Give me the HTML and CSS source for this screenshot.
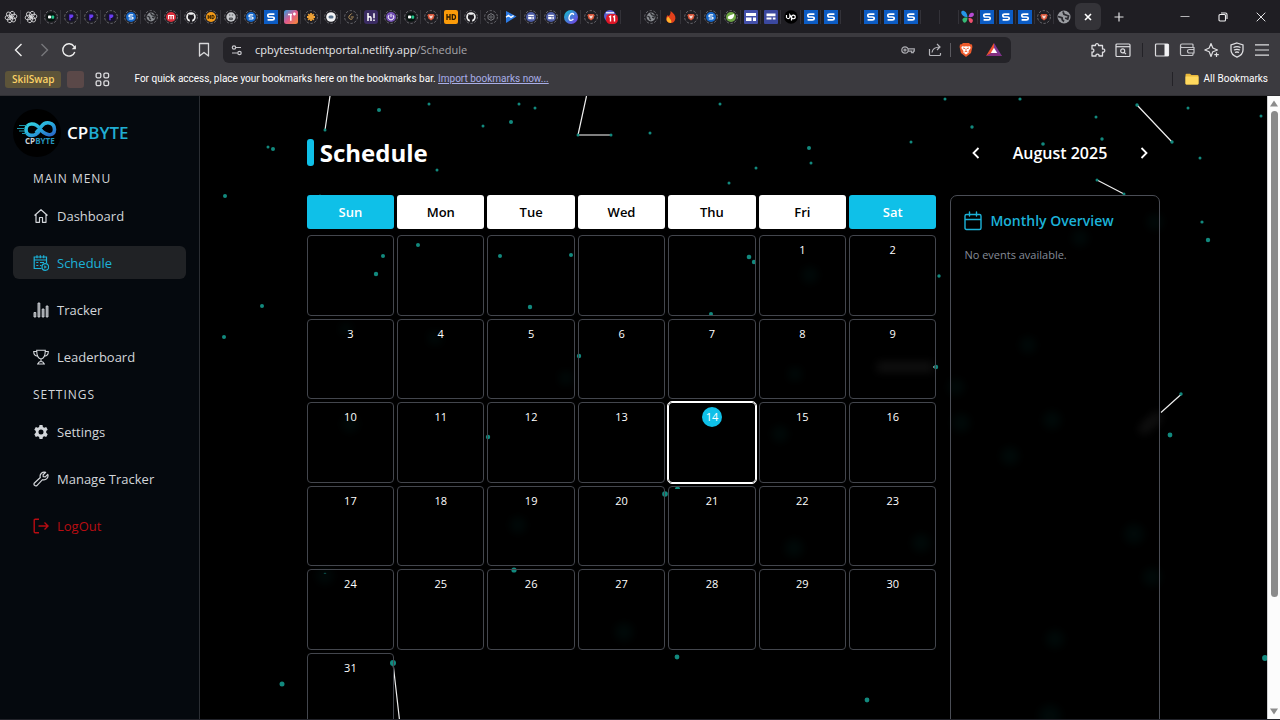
FILE: index.html
```html
<!DOCTYPE html>
<html lang="en">
<head>
<meta charset="utf-8">
<meta name="viewport" content="width=device-width, initial-scale=1">
<title>CPByte Schedule</title>
<link rel="stylesheet" href="styles.css">
</head>
<body>
<svg class="sprite" aria-hidden="true">
  <defs>
    <linearGradient id="g-inf" x1="0" y1="0" x2="1" y2="1"><stop offset="0" stop-color="#35d6e0"/><stop offset=".5" stop-color="#27a9dc"/><stop offset="1" stop-color="#2a63c8"/></linearGradient>
    <linearGradient id="g-t" x1="0" y1="0" x2="1" y2="1"><stop offset="0" stop-color="#2c9fe0"/><stop offset=".5" stop-color="#e05a8c"/><stop offset="1" stop-color="#f58a34"/></linearGradient>
    <linearGradient id="g-c" x1="0" y1="0" x2="1" y2="1"><stop offset="0" stop-color="#10c4cc"/><stop offset="1" stop-color="#7a35e4"/></linearGradient>
    <filter id="soft" x="-100%" y="-100%" width="300%" height="300%"><feGaussianBlur stdDeviation="5"/></filter>
    <symbol id="ring" viewBox="0 0 14 14"><circle cx="7" cy="7" r="6.4" fill="none" stroke="#737378" stroke-width=".9" stroke-dasharray="2.4 1.6"/></symbol>
    <symbol id="gpt" viewBox="0 0 14 14"><g fill="none" stroke="#dcdcde" stroke-width=".8"><ellipse cx="7" cy="4.4" rx="2.3" ry="3.4" transform="rotate(20 7 7)"/><ellipse cx="7" cy="4.4" rx="2.3" ry="3.4" transform="rotate(80 7 7)"/><ellipse cx="7" cy="4.4" rx="2.3" ry="3.4" transform="rotate(140 7 7)"/><ellipse cx="7" cy="4.4" rx="2.3" ry="3.4" transform="rotate(200 7 7)"/><ellipse cx="7" cy="4.4" rx="2.3" ry="3.4" transform="rotate(260 7 7)"/><ellipse cx="7" cy="4.4" rx="2.3" ry="3.4" transform="rotate(320 7 7)"/></g></symbol>
    <symbol id="cam" viewBox="0 0 14 14"><use href="#ring"/><circle cx="7" cy="7" r="4.6" fill="#06130f"/><rect x="4" y="5.6" width="3" height="3" rx=".8" fill="#fff"/><rect x="7.4" y="5.4" width="2.8" height="3.4" rx=".8" fill="#23c48a"/></symbol>
    <symbol id="pin" viewBox="0 0 14 14"><use href="#ring"/><circle cx="7" cy="7" r="4.6" fill="#17132e"/><path d="M5.2 4.4h3.4L9.6 6 8 8H6.6v2.2H5.4z" fill="#6a3df0"/></symbol>
    <symbol id="sring" viewBox="0 0 14 14"><use href="#ring"/><circle cx="7" cy="7" r="5" fill="#1667c9"/><path d="M9.2 4.9H6.1q-1.2 0-1.2 1T6.1 7h1.8q1.2 0 1.2 1T7.9 9H4.8" fill="none" stroke="#fff" stroke-width="1.2"/></symbol>
    <symbol id="globe" viewBox="0 0 14 14"><use href="#ring"/><circle cx="7" cy="7" r="4.4" fill="#8b8e93"/><path d="M3.4 6l2.2 1.2.3 2L7 10M6.6 3l1 1.700 2.800 1-.6 2.200-1.700-.8" fill="none" stroke="#2c2d31" stroke-width="1.300"/></symbol>
    <symbol id="mred" viewBox="0 0 14 14"><use href="#ring"/><circle cx="7" cy="7" r="5" fill="#d9303d"/><path d="M4.600 9.200V5.500h4.800v3.700M7 5.500v3.700" fill="none" stroke="#fff" stroke-width="1.100"/></symbol>
    <symbol id="git" viewBox="0 0 14 14"><use href="#ring"/><circle cx="7" cy="7" r="4.8" fill="#f2f2f3"/><path d="M5.800 12V9.800C4 9.300 3.800 8 3.900 6.700c0-.6.2-.9.5-1.300V4l1.300.7h2.600L9.600 4v1.400c.9 1.200.8 3.600-1.400 4.300V12z" fill="#1f1e23"/></symbol>
    <symbol id="hdr" viewBox="0 0 14 14"><use href="#ring"/><circle cx="7" cy="7" r="5" fill="#f29a18"/><path d="M4.200 5v4M6.300 5v4M4.200 7h2.100M8 5v4M8 5.200q2.200 0 2.200 1.800T8 8.800" fill="none" stroke="#2c1c00" stroke-width="1"/></symbol>
    <symbol id="face" viewBox="0 0 14 14"><use href="#ring"/><circle cx="7" cy="7" r="4.700" fill="#c5c7cb"/><path d="M5 5h1.400M7.800 5h1.400M5.400 8h3v1.600h-3z" stroke="#44464a" fill="#85878c" stroke-width=".9"/></symbol>
    <symbol id="ssq" viewBox="0 0 14 14"><path fill="#0c5cc4" d="M0 0h14v14H0z"/><path d="M10.400 4.100H5.700q-1.900 0-1.900 1.500T5.700 7h2.600q1.900 0 1.900 1.400T8.300 9.900H3.600" fill="none" stroke="#fff" stroke-width="1.700"/></symbol>
    <symbol id="tsq" viewBox="0 0 14 14"><rect width="14" height="14" rx="2.500" fill="url(#g-t)"/><path d="M4 4.600h4M6.800 4.200v6.500M10.400 2.600v3M9 4h2.800" stroke="#fff" stroke-width="1.500" fill="none"/></symbol>
    <symbol id="sun" viewBox="0 0 14 14"><use href="#ring"/><path d="M7 3v8M3 7h8M4.200 4.200l5.600 5.600M9.800 4.200L4.200 9.800" stroke="#eda136" stroke-width="1.800"/></symbol>
    <symbol id="chat" viewBox="0 0 14 14"><use href="#ring"/><circle cx="7" cy="7" r="4.800" fill="#f3f4f6"/><rect x="4.500" y="5.400" width="5" height="3" rx="1.500" fill="#59738d"/></symbol>
    <symbol id="leet" viewBox="0 0 14 14"><use href="#ring"/><path d="M7.800 3.400L5.200 6q-1 1.400.2 2.600 1.600 1.600 3.200 0M6.800 7h3" fill="none" stroke="#b9955c" stroke-width="1"/></symbol>
    <symbol id="hash" viewBox="0 0 14 14"><rect width="14" height="14" rx="3" fill="#3b2c63"/><path d="M4 3v8M4 7.300q3-1.600 3 .8V11M10 3.200v5M10 9.600V11" stroke="#fff" stroke-width="1.500" fill="none"/></symbol>
    <symbol id="power" viewBox="0 0 14 14"><use href="#ring"/><circle cx="7" cy="7" r="5" fill="#7551b7"/><path d="M7 3.800V7M5 5.100a2.800 2.800 0 1 0 4 0" stroke="#fff" fill="none"/></symbol>
    <symbol id="brave" viewBox="0 0 14 14"><use href="#ring"/><path d="M4.300 4h5.400l.8 1.200-.8 3.300L7 10.600 4.300 8.500 3.500 5.200z" fill="#d7563a"/><path d="M5 5.300l2 .6 2-.6-.6 1.900L7 9 5.600 7.200z" fill="#f3d9d2"/></symbol>
    <symbol id="hdsq" viewBox="0 0 14 14"><rect width="14" height="14" rx="2" fill="#fb9b09"/><path d="M3 4v6M6 4v6M3 7h3M8.300 4v6M8.300 4.600q3.200-.4 3.200 2.400t-3.200 2.400" fill="none" stroke="#2b1a00" stroke-width="1.300"/></symbol>
    <symbol id="gem" viewBox="0 0 14 14"><use href="#ring"/><path d="M7 3.600l3 1.700v3.400l-3 1.700-3-1.700V5.300z" fill="none" stroke="#7c7d82"/><circle cx="7" cy="7" r="1.200" fill="none" stroke="#7c7d82" stroke-width=".8"/></symbol>
    <symbol id="play" viewBox="0 0 14 14"><path d="M2 1l10.500 5.500L2 13z" fill="#2c7be5"/><path d="M2 7.200l2.500-1.800 2.500 2 2.600-1.800" stroke="#fff" fill="none" stroke-width="1.300"/></symbol>
    <symbol id="calr" viewBox="0 0 14 14"><use href="#ring"/><circle cx="7" cy="7" r="5" fill="#4c5ca6"/><path d="M4.200 4.800h5.600v4.400H4.200z" fill="#fff"/><path d="M4.200 6.500h5.600M8 6.500v2.700" stroke="#4c5ca6" stroke-width=".8"/></symbol>
    <symbol id="canva" viewBox="0 0 14 14"><circle cx="7" cy="7" r="7" fill="url(#g-c)"/><path d="M9.500 5q.2-1.700-1.500-1.500C5.800 3.900 4.800 7 5 8.600c.3 2.300 2.900 2.300 4.400.2" fill="none" stroke="#fff" stroke-width="1.300"/></symbol>
    <symbol id="badge" viewBox="0 0 14 14"><circle cx="6" cy="6" r="6" fill="#575fd0"/><path d="M2 2.800h8" stroke="#fff" stroke-width="1.200"/><rect x="2" y="4" width="12" height="10" rx="4.500" fill="#dd1626"/><path d="M5 7l1.500-.8v5.300M9 7l1.500-.8v5.300" stroke="#fff" stroke-width="1.400" fill="none"/></symbol>
    <symbol id="flame" viewBox="0 0 14 14"><path d="M6.600 1c3 2.200 5.200 4.700 4.800 7.500C11 11.500 9 13 7 13c-3 0-4.800-2-4.800-4.300 0-1.700.8-2.800 1.700-3.700l.8 1.200C6 5 6.800 3.500 6.600 1z" fill="#e2401b"/><path d="M4 6.500C1 10 3.500 13 7 13c1.500-2-1-4.300-3-6.500z" fill="#fdb32b"/></symbol>
    <symbol id="leaf" viewBox="0 0 14 14"><use href="#ring"/><circle cx="7" cy="7" r="5" fill="#6da544"/><path d="M3.800 8.500C3.500 5 7 5.500 10 3.800c.5 4-2 6.700-6.200 4.700z" fill="#fff"/></symbol>
    <symbol id="cals" viewBox="0 0 14 14"><rect width="14" height="14" rx="1" fill="#4450aa"/><path d="M2 3h10v3H2zM2 7.400h5.500V11H2zM9 7.400h3V11H9z" fill="#fff"/></symbol>
    <symbol id="calt" viewBox="0 0 14 14"><rect width="14" height="14" rx="1" fill="#3b489f"/><path d="M2.500 3.500h9v2.700h-9zM2.500 7.500h5v2h-5zM8.800 7.500h2.700v2H8.800z" fill="#fff"/></symbol>
    <symbol id="up" viewBox="0 0 14 14"><circle cx="7" cy="7" r="6.800" fill="#000"/><path d="M2.500 5v2.500q1.700 2.400 3.400 0V5L8 8M7.500 10.500V6.800c.5-2.600 4-2 3.800.3C11 9 9 9.200 7.800 8" fill="none" stroke="#fff" stroke-width="1.200"/></symbol>
    <symbol id="fly" viewBox="0 0 14 14"><path d="M6.500 7C6 2 3 0 1 1s0 6 5.500 6z" fill="#2596e8"/><path d="M6.500 7.500C2 7 .5 9 2 11.500s4.500 1 4.500-4z" fill="#36ba75"/><path d="M7.500 7c.5-4 3-5 4.700-4s.6 5-4.700 4z" fill="#b64bd3"/><path d="M7.500 8c4 0 5 2 4 4s-4 1-4-4z" fill="#f0506e"/></symbol>
    <symbol id="world" viewBox="0 0 14 14"><circle cx="7" cy="7" r="6.500" fill="#9b9da2"/><path d="M1 6.500l4 1.300.3 2L7 11.500M6 1.500l1 2.800L11.500 6l-.8 3-2.500-1" fill="none" stroke="#2b2b30" stroke-width="1.800"/></symbol>
  </defs>
</svg>

<header class="browser">
  <div class="tabstrip">
    <div class="tabs">
      <button class="tab" aria-label="Tab 1"><svg><use href="#gpt"/></svg></button>
      <button class="tab" aria-label="Tab 2"><svg><use href="#gpt"/></svg></button>
      <button class="tab" aria-label="Tab 3"><svg><use href="#cam"/></svg></button>
      <button class="tab" aria-label="Tab 4"><svg><use href="#pin"/></svg></button>
      <button class="tab" aria-label="Tab 5"><svg><use href="#pin"/></svg></button>
      <button class="tab" aria-label="Tab 6"><svg><use href="#pin"/></svg></button>
      <button class="tab" aria-label="Tab 7"><svg><use href="#sring"/></svg></button>
      <button class="tab" aria-label="Tab 8"><svg><use href="#globe"/></svg></button>
      <button class="tab" aria-label="Tab 9"><svg><use href="#mred"/></svg></button>
      <button class="tab" aria-label="Tab 10"><svg><use href="#git"/></svg></button>
      <button class="tab" aria-label="Tab 11"><svg><use href="#hdr"/></svg></button>
      <button class="tab" aria-label="Tab 12"><svg><use href="#face"/></svg></button>
      <button class="tab" aria-label="Tab 13"><svg><use href="#sring"/></svg></button>
      <button class="tab" aria-label="Tab 14"><svg><use href="#ssq"/></svg></button>
      <button class="tab" aria-label="Tab 15"><svg><use href="#tsq"/></svg></button>
      <button class="tab" aria-label="Tab 16"><svg><use href="#sun"/></svg></button>
      <button class="tab" aria-label="Tab 17"><svg><use href="#chat"/></svg></button>
      <button class="tab" aria-label="Tab 18"><svg><use href="#leet"/></svg></button>
      <button class="tab" aria-label="Tab 19"><svg><use href="#hash"/></svg></button>
      <button class="tab" aria-label="Tab 20"><svg><use href="#power"/></svg></button>
      <button class="tab" aria-label="Tab 21"><svg><use href="#cam"/></svg></button>
      <button class="tab" aria-label="Tab 22"><svg><use href="#brave"/></svg></button>
      <button class="tab" aria-label="Tab 23"><svg><use href="#hdsq"/></svg></button>
      <button class="tab" aria-label="Tab 24"><svg><use href="#git"/></svg></button>
      <button class="tab" aria-label="Tab 25"><svg><use href="#gem"/></svg></button>
      <button class="tab" aria-label="Tab 26"><svg><use href="#play"/></svg></button>
      <button class="tab" aria-label="Tab 27"><svg><use href="#calr"/></svg></button>
      <button class="tab" aria-label="Tab 28"><svg><use href="#calr"/></svg></button>
      <button class="tab" aria-label="Tab 29"><svg><use href="#canva"/></svg></button>
      <button class="tab" aria-label="Tab 30"><svg><use href="#brave"/></svg></button>
      <button class="tab" aria-label="Tab 31"><svg><use href="#badge"/></svg></button>
      <button class="tab" aria-label="Tab 32"></button>
      <button class="tab" aria-label="Tab 33"><svg><use href="#globe"/></svg></button>
      <button class="tab" aria-label="Tab 34"><svg><use href="#flame"/></svg></button>
      <button class="tab" aria-label="Tab 35"><svg><use href="#brave"/></svg></button>
      <button class="tab" aria-label="Tab 36"><svg><use href="#sring"/></svg></button>
      <button class="tab" aria-label="Tab 37"><svg><use href="#leaf"/></svg></button>
      <button class="tab" aria-label="Tab 38"><svg><use href="#cals"/></svg></button>
      <button class="tab" aria-label="Tab 39"><svg><use href="#calt"/></svg></button>
      <button class="tab" aria-label="Tab 40"><svg><use href="#up"/></svg></button>
      <button class="tab" aria-label="Tab 41"><svg><use href="#ssq"/></svg></button>
      <button class="tab" aria-label="Tab 42"><svg><use href="#ssq"/></svg></button>
      <button class="tab" aria-label="Tab 43"></button>
      <button class="tab" aria-label="Tab 44"><svg><use href="#ssq"/></svg></button>
      <button class="tab" aria-label="Tab 45"><svg><use href="#ssq"/></svg></button>
      <button class="tab" aria-label="Tab 46"><svg><use href="#ssq"/></svg></button>
      <button class="tab narrow" aria-label="Tab 47"></button>
      <button class="tab narrow" aria-label="Tab 48"></button>
      <button class="tab narrow" aria-label="Tab 49"><svg><use href="#fly"/></svg></button>
      <button class="tab narrow" aria-label="Tab 50"><svg><use href="#ssq"/></svg></button>
      <button class="tab narrow" aria-label="Tab 51"><svg><use href="#ssq"/></svg></button>
      <button class="tab narrow" aria-label="Tab 52"><svg><use href="#ssq"/></svg></button>
      <button class="tab narrow" aria-label="Tab 53"><svg><use href="#brave"/></svg></button>
      <button class="tab narrow last" aria-label="Tab 54"><svg><use href="#world"/></svg></button>
      <button class="tab-active" aria-label="Close tab"><svg viewBox="0 0 8 8"><path d="M1 1l6 6M7 1L1 7" stroke="#fff" stroke-width="1.600"/></svg></button>
      <button class="tab-new" aria-label="New tab"><svg viewBox="0 0 10 10"><path d="M5 .5v9M.5 5h9" stroke="#e2e2e4" stroke-width="1.200"/></svg></button>
    </div>
    <div class="window-buttons">
      <button aria-label="Minimize"><svg viewBox="0 0 10 10"><path d="M.5 4.500h9" stroke="#b5b5b8"/></svg></button>
      <button aria-label="Restore"><svg viewBox="0 0 10 10"><g fill="none" stroke="#f0f0f2" stroke-width="1.100"><rect x="1" y="2.500" width="6.500" height="6.500" rx="1"/><path d="M3 1h4.500Q9 1 9 2.500V7"/></g></svg></button>
      <button aria-label="Close"><svg viewBox="0 0 10 10"><path d="M.7.7l8.600 8.600M9.300.7L.7 9.300" stroke="#e2e2e4"/></svg></button>
    </div>
  </div>

  <div class="toolbar">
    <div class="nav-buttons">
      <button aria-label="Back"><svg viewBox="0 0 16 16"><path d="M10.500 2L4.500 8l6 6" stroke="#eee" stroke-width="1.400" fill="none"/></svg></button>
      <button aria-label="Forward"><svg viewBox="0 0 16 16"><path d="M5.500 2l6 6-6 6" stroke="#77777b" stroke-width="1.400" fill="none"/></svg></button>
      <button aria-label="Reload"><svg viewBox="0 0 16 16"><path d="M13.800 10A6.200 6.200 0 1 1 13 4.300l1 1.500" stroke="#eee" stroke-width="1.400" fill="none"/><path d="M14.900 3v4.200h-4.200z" fill="#eee"/></svg></button>
    </div>
    <button class="bookmark" aria-label="Bookmark this page"><svg viewBox="0 0 16 16"><path d="M3.500 1.500h9v12.500L8 10.500 3.500 14z" stroke="#d8d8da" stroke-width="1.300" fill="none" stroke-linejoin="round"/></svg></button>
    <div class="address">
      <button aria-label="Site settings"><svg viewBox="0 0 14 14"><g fill="none" stroke="#c8c8cc" stroke-width="1.200"><circle cx="4" cy="4.500" r="1.700"/><path d="M5.700 4.500H11M2 10h5.500"/><circle cx="9.500" cy="10" r="1.700"/></g></svg></button>
      <div class="url" role="textbox" aria-label="Address">cpbytestudentportal.netlify.app<span>/Schedule</span></div>
      <div class="address-actions">
        <button aria-label="Passwords"><svg viewBox="0 0 14 14"><g fill="none" stroke="#a9a9ae" stroke-width="1.200"><circle cx="4" cy="7" r="3.200"/><circle cx="4" cy="7" r="1"/><path d="M7 5.900h6.300v2.200h-1v1.600h-1.800V8.100H7"/></g></svg></button>
        <button aria-label="Share"><svg viewBox="0 0 14 14"><path d="M1.500 6v5.500q0 1 1 1h9q1 0 1-1V10M4 9.500C4.500 5.500 7 4 12 4M9 1l3 3-3 3" fill="none" stroke="#b5b5ba" stroke-width="1.200"/></svg></button>
        <i class="bar"></i>
        <button aria-label="Brave shields"><svg viewBox="0 0 14 14"><path d="M4 0h6l1.300 1.200L13 1.500l.4 2.500L12 10l-5 4-5-4L.6 4 1 1.500l1.700-.3z" fill="#ee5a2b"/><path d="M3 3.200l2.600.3L7 3.200l1.400.3 2.600-.3.7 1.800L9.500 8l.2 1.500L7 11.500 4.300 9.500 4.500 8 2.300 5z" fill="#fff"/><path d="M4 5l2 .6M10 5l-2 .6M7 5.500v2.300M5.500 9L7 8.200 8.500 9" stroke="#ee5a2b" stroke-width=".9" fill="none"/></svg></button>
        <button class="rewards" aria-label="Brave rewards"><svg viewBox="0 0 16 14"><path d="M8 0l8 13H8z" fill="#7c3691"/><path d="M8 0L0 13l8-4z" fill="#ee5132"/><path d="M0 13h16L8 8.500z" fill="#842e80"/><path d="M8 4.800l3.200 5.200H4.800z" fill="#fff"/></svg></button>
      </div>
    </div>
    <div class="toolbar-actions">
      <button aria-label="Extensions"><svg viewBox="0 0 16 16"><path d="M2 3.500h3.500c-.6-2.500 3.600-2.500 3 0h4V7c3-.6 3 3.800 0 3.200V14H9c.5-2.600-3.600-2.600-3 0H2v-4c2.500.5 2.500-3.500 0-3z" fill="none" stroke="#dedee1" stroke-width="1.300" stroke-linejoin="round"/></svg></button>
      <button aria-label="Search tabs"><svg viewBox="0 0 16 16"><g fill="none" stroke="#dedee1" stroke-width="1.200"><rect x="1" y="2" width="14" height="12.500" rx="1"/><path d="M1 4.700h14"/><circle cx="7.700" cy="8.900" r="2"/><path d="M9.200 10.400l1.800 1.800"/></g></svg></button>
      <i class="bar dark"></i>
      <button aria-label="Sidebar"><svg viewBox="0 0 16 16"><rect x="1.500" y="2" width="13" height="12" rx="1" fill="none" stroke="#dedee1" stroke-width="1.200"/><path d="M10.500 2h4v12h-4z" fill="#f2f2f4"/></svg></button>
      <button aria-label="Wallet"><svg viewBox="0 0 16 16"><g fill="none" stroke="#c5c5c9" stroke-width="1.200"><path d="M14 5.500V3q0-1-1-1H3Q1.500 2 1.500 3.500V12q0 1.500 1.500 1.500h10q1 0 1-1V11M1.500 4q0 1.500 1.500 1.500h12V11h-4.500Q8.500 11 8.500 9.200T10.500 7.500H15"/></g></svg></button>
      <button aria-label="Leo AI"><svg viewBox="0 0 16 16"><path d="M7 1.500L8.800 6 13.500 8 8.800 9.700 7 14.500 5.200 9.700.8 8l4.400-2zM12.500 10.500v4.500M10.300 12.700h4.500" fill="none" stroke="#dedee1" stroke-width="1.200" stroke-linejoin="round"/></svg></button>
      <button aria-label="VPN"><svg viewBox="0 0 16 16"><path d="M8 1l6 2v5c0 3.500-3 6-6 7.200C5 14 2 11.500 2 8V3zM4.500 5.500q3.500-1.700 7 0M5 8q3-1.400 6 0M6 10.500q2-1 4 0" fill="none" stroke="#dedee1" stroke-width="1.300"/></svg></button>
      <button aria-label="Menu"><svg viewBox="0 0 16 16"><path d="M1 2.800h14M1 8h14M1 13.200h14" stroke="#dedee1" stroke-width="1.200"/></svg></button>
    </div>
  </div>

  <div class="bookmarks">
    <button class="group">SkilSwap</button>
    <button class="group-blank" aria-label="Tab group"></button>
    <button class="apps" aria-label="Apps"><svg viewBox="0 0 16 16"><g fill="none" stroke="#dcdcdf" stroke-width="1.400"><rect x="1.200" y="1.200" width="5" height="5" rx="1.500"/><rect x="9.500" y="1.200" width="5" height="5" rx="1.500"/><rect x="1.200" y="9.500" width="5" height="5" rx="1.500"/><rect x="9.500" y="9.500" width="5" height="5" rx="1.500"/></g></svg></button>
    <p>For quick access, place your bookmarks here on the bookmarks bar. <a href="#import">Import bookmarks now...</a></p>
    <i class="bar dark"></i>
    <button class="all"><svg viewBox="0 0 14 12"><path d="M.5 2q0-1.300 1-1.300h3.500L6.500 2H12.500q1 0 1 1v7.500q0 1-1 1h-11q-1 0-1-1z" fill="#e8b83c"/><path d="M.5 3.500h13v7q0 1-1 1h-11q-1 0-1-1z" fill="#ffd95e"/></svg>All Bookmarks</button>
  </div>
</header>

<div class="viewport">
  <aside class="sidebar">
    <div class="brand">
      <svg viewBox="0 0 48 48" role="img" aria-label="CPByte logo"><circle cx="24" cy="24" r="24" fill="#000"/><path d="M27 20.800C22.500 28.500 13 28 13 20.800S22.500 13 27 19.800s14.500 8.700 14.500.7-9.500-8.500-13-3.200l-5.500 6.500" fill="none" stroke="url(#g-inf)" stroke-width="3.600"/><path d="M6 16.500h8M4 19.500h7M6 22h6M9 24.500h5" stroke="#1c95a9" stroke-width="1"/><text class="logo-text" x="12" y="34.500" fill="#cfd3d6">CP<tspan fill="#2594bd">BYTE</tspan></text></svg>
      <strong>CP<span>BYTE</span></strong>
    </div>
    <nav>
      <h2>MAIN MENU</h2>
      <a href="#dashboard"><svg viewBox="0 0 16 16"><path d="M1.500 7.500L8 1.700l6.500 5.800M3 6.500v7.800h3.500V9.500h3v4.800H13V6.500" fill="none" stroke="currentColor" stroke-width="1.200" stroke-linejoin="round"/></svg>Dashboard</a>
      <a href="#schedule" class="current" aria-current="page"><svg viewBox="0 0 16 16"><g fill="none" stroke="currentColor" stroke-width="1.200"><path d="M8.500 13.500H1.200V2h12.300v6M1.200 5h12.300M4 .3v3M7.300.3v3M10.700.3v3M3.300 7.500h2M7 7.500h4M3.300 10.500h2M7 10.500h1.500"/><circle cx="12.300" cy="12" r="3.300"/><path d="M11.500 10.700v2.600l2-1.300z" fill="currentColor" stroke-width=".5"/></g></svg>Schedule</a>
      <a href="#tracker"><svg viewBox="0 0 16 16"><g fill="#85888d" stroke="currentColor" stroke-width=".9"><path d="M1 10.500h1.800V15H1zM5 1h1.800v14H5zM9.200 7H11v8H9.200zM13.200 4H15v11h-1.800z"/></g></svg>Tracker</a>
      <a href="#leaderboard"><svg viewBox="0 0 16 16"><path d="M3.700 1.200h8.600C12.300 6 11 9.500 8 10 5 9.500 3.700 6 3.700 1.200zM3.800 2.500H.7c0 3 1.500 4.500 4 4.800M12.200 2.500h3.100c0 3-1.500 4.500-4 4.800M8 10v2.500M5 15q.5-2.500 3-2.500t3 2.500M4 15h8" fill="none" stroke="currentColor" stroke-width="1.100"/></svg>Leaderboard</a>
      <h2>SETTINGS</h2>
      <a href="#settings"><svg viewBox="0 0 16 16"><path fill="currentColor" fill-rule="evenodd" d="M6.500 1h3l.4 2 1.300.8 2-.7 1.500 2.600-1.500 1.400v1.700l1.500 1.500-1.500 2.600-2-.7-1.300.8-.4 2h-3l-.4-2-1.300-.8-2 .7-1.500-2.600 1.500-1.500V7.100L1.300 5.700l1.500-2.600 2 .7L6.100 3zM8 5.500A2.500 2.500 0 1 0 8 10.500 2.500 2.500 0 0 0 8 5.500z"/></svg>Settings</a>
      <a href="#manage"><svg viewBox="0 0 16 16"><path d="M12.700 1.300A4.200 4.200 0 0 0 7.300 6.500L1.200 12.200q-.6 1.300.4 2.200t2.300.2L9.500 8.700A4.200 4.200 0 0 0 14.800 3.400L12.300 5.900 10.200 5.700 10.100 3.800z" fill="none" stroke="currentColor" stroke-width="1.200" stroke-linejoin="round"/></svg>Manage Tracker</a>
      <a href="#logout" class="logout"><svg viewBox="0 0 16 16"><path d="M6 1.300H2.200q-1 0-1 1v11.400q0 1 1 1H6M5.500 8H15M11.500 4.500L15 8l-3.500 3.500" fill="none" stroke="currentColor" stroke-width="1.400"/></svg>LogOut</a>
    </nav>
  </aside>

  <main>
    <svg class="particles" viewBox="200 96 1067 624" preserveAspectRatio="xMinYMin slice" aria-hidden="true">
      <g stroke="#eee" stroke-width="1.200" fill="none">
        <path d="M330 96L325 130M586.500 96L578 135M1137 105L1172 142M1097 180L1124 194M1161 412.500L1181 394.500M393 663L399.500 720M933 367h4"/>
        <path d="M578 135h33" stroke="#aaa" stroke-width="1.600"/>
      </g>
      <g fill="#12897e">
        <circle cx="379" cy="110" r="2"/><circle cx="429" cy="104" r="1.500"/><circle cx="519" cy="104" r="1.500"/><circle cx="535" cy="108" r="1.500"/><circle cx="483" cy="126" r="1.500"/><circle cx="511" cy="122" r="2"/><circle cx="325" cy="130" r="1.500"/><circle cx="268" cy="147" r="1.500"/><circle cx="273" cy="149" r="2"/><circle cx="437" cy="170" r="1.500"/><circle cx="225" cy="196" r="2"/><circle cx="320" cy="196" r="1.500"/><circle cx="383" cy="256" r="2"/><circle cx="376" cy="274" r="2.200"/><circle cx="418" cy="245" r="2"/><circle cx="500" cy="256" r="2"/><circle cx="571" cy="255" r="2"/><circle cx="530" cy="307" r="2.200"/><circle cx="262" cy="306" r="2"/><circle cx="224" cy="337" r="2"/>
        <circle cx="578" cy="135" r="1.500"/><circle cx="611" cy="135" r="1.500"/><circle cx="650" cy="133" r="1.500"/><circle cx="720" cy="104" r="1.500"/><circle cx="809" cy="148" r="2"/><circle cx="811" cy="163" r="1.500"/><circle cx="756" cy="168" r="1.500"/><circle cx="729" cy="183" r="1.500"/><circle cx="911" cy="142" r="1.500"/><circle cx="945" cy="99" r="1.500"/><circle cx="749" cy="257" r="2.300"/><circle cx="754" cy="262" r="2.200"/><circle cx="711" cy="314" r="2"/><circle cx="939" cy="276" r="1.700"/><circle cx="579" cy="356" r="2.200"/><circle cx="936" cy="367" r="2.200"/><circle cx="488" cy="437" r="2.200"/><circle cx="665" cy="494" r="2.800"/><path d="M675 489a2.500 2.500 0 0 1 5 0z"/><circle cx="514" cy="570" r="2.600"/><circle cx="677" cy="657" r="2.400"/><circle cx="393" cy="663" r="3"/><circle cx="282" cy="684" r="2.500"/><circle cx="867" cy="700" r="2.400"/>
        <circle cx="1020" cy="99" r="1.600"/><circle cx="1096" cy="117" r="1.500"/><circle cx="972" cy="127" r="1.700"/><circle cx="1043" cy="144" r="1.800"/><circle cx="1102" cy="139" r="1.700"/><circle cx="1137" cy="105" r="1.700"/><circle cx="1172" cy="142" r="1.700"/><circle cx="1188" cy="108" r="1.500"/><circle cx="1261" cy="116" r="1.500"/><circle cx="1200" cy="158" r="1.500"/><circle cx="1097" cy="180" r="1.500"/><circle cx="1124" cy="194" r="1.500"/><circle cx="1202" cy="222" r="1.600"/><circle cx="1208" cy="240" r="2.200"/><circle cx="1181" cy="394" r="1.700"/><circle cx="1170" cy="435" r="2.400"/><circle cx="1265" cy="658" r="2.900"/><path d="M323.500 573.500q1.500-1.500 3 0z"/>
      </g>
      <g filter="url(#soft)" fill="#0e7c72" opacity=".08">
        <circle cx="810" cy="275" r="8"/><circle cx="435" cy="338" r="7"/><circle cx="346" cy="329" r="6"/><circle cx="566" cy="378" r="7"/><circle cx="795" cy="374" r="7"/><circle cx="350" cy="424" r="8"/><circle cx="780" cy="434" r="8"/><circle cx="518" cy="525" r="8"/><circle cx="794" cy="548" r="9"/><circle cx="921" cy="543" r="9"/><circle cx="325" cy="576" r="8"/><circle cx="624" cy="632" r="9"/><circle cx="1028" cy="345" r="8"/><circle cx="956" cy="387" r="8"/><circle cx="961" cy="423" r="9"/><circle cx="1052" cy="420" r="9"/><circle cx="1010" cy="456" r="9"/><circle cx="1134" cy="534" r="10"/><circle cx="1152" cy="577" r="9"/><circle cx="1055" cy="639" r="9"/><circle cx="1050" cy="716" r="11"/><circle cx="1155" cy="222" r="8"/><circle cx="1080" cy="238" r="8"/>
      </g>
      <path d="M877 367h56M1141 432l19-18" stroke="#777" stroke-width="9" opacity=".16" filter="url(#soft)"/>
    </svg>

    <div class="schedule">
      <header class="schedule-head">
        <h1>Schedule</h1>
        <div class="month">
          <button aria-label="Previous month"><svg viewBox="0 0 16 16"><path d="M10.500 3l-5 5 5 5" fill="none" stroke="#fff" stroke-width="1.800"/></svg></button>
          <span>August 2025</span>
          <button aria-label="Next month"><svg viewBox="0 0 16 16"><path d="M5.500 3l5 5-5 5" fill="none" stroke="#fff" stroke-width="1.800"/></svg></button>
        </div>
      </header>
      <div class="columns">
        <section class="calendar" aria-label="August 2025">
          <div class="weekdays"><div class="weekend">Sun</div><div>Mon</div><div>Tue</div><div>Wed</div><div>Thu</div><div>Fri</div><div class="weekend">Sat</div></div>
          <div class="days">
            <div></div><div></div><div></div><div></div><div></div><div><span>1</span></div><div><span>2</span></div>
            <div><span>3</span></div><div><span>4</span></div><div><span>5</span></div><div><span>6</span></div><div><span>7</span></div><div><span>8</span></div><div><span>9</span></div>
            <div><span>10</span></div><div><span>11</span></div><div><span>12</span></div><div><span>13</span></div><div class="today"><span>14</span></div><div><span>15</span></div><div><span>16</span></div>
            <div><span>17</span></div><div><span>18</span></div><div><span>19</span></div><div><span>20</span></div><div><span>21</span></div><div><span>22</span></div><div><span>23</span></div>
            <div><span>24</span></div><div><span>25</span></div><div><span>26</span></div><div><span>27</span></div><div><span>28</span></div><div><span>29</span></div><div><span>30</span></div>
            <div><span>31</span></div>
          </div>
        </section>
        <section class="overview">
          <h2><svg viewBox="0 0 18 20"><path d="M2.500 3.500h13q1.500 0 1.500 1.500v12q0 1.500-1.500 1.500h-13Q1 18.500 1 17V5q0-1.500 1.500-1.500zM1 8.500h16M5.500 1v4M12.500 1v4" fill="none" stroke="currentColor" stroke-width="1.400" stroke-linecap="round"/></svg>Monthly Overview</h2>
          <p>No events available.</p>
        </section>
      </div>
    </div>
  </main>

  <div class="scrollbar" aria-hidden="true">
    <svg viewBox="0 0 8 7"><path d="M4 .5L8 6.500H0z"/></svg>
    <div class="track"><div class="thumb"></div></div>
    <svg viewBox="0 0 8 7"><path d="M4 6.500L0 .5h8z"/></svg>
  </div>
</div>
</body>
</html>
```
FILE: styles.css
```css
* { box-sizing: border-box; }
body {
  margin: 0;
  height: 100vh;
  display: flex;
  flex-direction: column;
  overflow: hidden;
  background: #000;
  color: #fff;
  font: 13px/20px "Open Sans", "Noto Sans", sans-serif;
}
h1, h2, p { margin: 0; font-weight: 400; }
button { border: 0; padding: 0; background: none; color: inherit; font: inherit; display: flex; align-items: center; justify-content: center; }
svg { display: block; flex: none; }
a { color: inherit; text-decoration: none; }
.sprite { position: absolute; width: 0; height: 0; }

/* Browser chrome */
.browser { flex: none; background: #3b3a3f; border-bottom: 1px solid #303034; }
.tabstrip { display: flex; justify-content: space-between; height: 33px; background: #1f1e23; }
.tabs { display: flex; align-items: center; padding-left: 1px; }
.tab { width: 20px; height: 14px; border-right: 1px solid #333238; flex: none; }
.tab svg { width: 14px; height: 14px; }
.tab.narrow { width: 19px; }
.tab.last { border-right: 0; }
.tab-active { width: 26px; height: 27px; margin-left: 2px; border-radius: 6px; background: #343338; }
.tab-active svg { width: 8px; height: 8px; }
.tab-new { width: 36px; height: 27px; }
.tab-new svg { width: 10px; height: 10px; }
.window-buttons { display: flex; }
.window-buttons button { width: 38px; }
.window-buttons svg { width: 10px; height: 10px; }

.toolbar { display: flex; align-items: center; height: 34px; padding: 0 10px 0 11px; }
.nav-buttons { display: flex; gap: 9px; }
.toolbar svg { width: 16px; height: 16px; }
.bookmark { margin-left: 119px; }
.address { flex: 1; display: flex; align-items: center; height: 26px; margin: 0 79px 0 11px; padding: 0 9px 0 7px; border-radius: 6px; background: #242328; }
.address svg { width: 14px; height: 14px; }
.url { flex: 1; margin-left: 11px; font-size: 11px; color: #e6e6e8; }
.url span { color: #a6a6aa; }
.address-actions { display: flex; align-items: center; gap: 13px; }
.address-actions .bar { margin: 0 -5px; }
.address-actions .rewards svg { width: 16px; }
.bar { width: 1px; height: 14px; background: #5b5a60; }
.bar.dark { background: #232227; }
.toolbar-actions { display: flex; align-items: center; gap: 9px; }
.toolbar-actions .bar { margin: 0 2px; }

.bookmarks { display: flex; align-items: center; height: 28px; padding: 0 12px 4px 5px; font-size: 10px; font-family: Roboto, "Open Sans", sans-serif; }
.group { height: 17px; padding: 0 7px; border-radius: 3px; background: #5d5439; color: #fbd266; font-weight: 600; font-family: "Open Sans", sans-serif; }
.group-blank { width: 17px; height: 17px; margin-left: 6px; border-radius: 3px; background: #5a4848; }
.apps { margin: 0 24px 0 11px; }
.apps svg { width: 15px; height: 15px; }
.bookmarks p { flex: 1; }
.bookmarks p a { color: #a9aee8; text-decoration: underline; }
.all { margin-left: 12px; gap: 5px; }
.all svg { width: 14px; height: 12px; }

/* Page */
.viewport { flex: 1; display: flex; min-height: 0; border-bottom: 1px solid #22232a; }
.sidebar { flex: none; width: 200px; padding: 13px 13px 0; background: #05090e; border-right: 1px solid #2b2e33; color: #d3d6da; }
.brand { display: flex; align-items: center; gap: 6px; }
.brand svg { width: 48px; height: 48px; }
.brand strong { color: #fff; font-size: 17px; font-weight: 600; }
.brand span { color: #20add2; }
.logo-text { font: 700 8px "Open Sans", sans-serif; }
.sidebar nav { display: flex; flex-direction: column; gap: 14px; padding-top: 12px; }
.sidebar h2 { padding-left: 20px; font-size: 12px; letter-spacing: 1px; margin-bottom: -4px; }
.sidebar a { display: flex; align-items: center; gap: 8px; height: 33px; padding-left: 20px; border-radius: 6px; }
.sidebar a + h2 { margin-top: -2px; }
.sidebar a svg { width: 16px; height: 16px; }
.sidebar .current { background: #202225; color: #1cb2d8; }
.sidebar .logout { color: #b80d12; }

main { flex: 1; position: relative; overflow: hidden; }
.particles { position: absolute; inset: 0; width: 100%; height: 100%; }
.schedule { position: relative; width: 80%; margin: 0 auto; padding-top: 43px; }
.schedule-head { display: flex; align-items: center; justify-content: space-between; padding-right: 6px; margin-bottom: 29px; }
h1 { display: flex; gap: 6px; font-size: 24px; font-weight: 700; line-height: 27px; }
h1::before { content: ""; width: 7px; border-radius: 3px; background: #0fc0e8; }
.month { display: flex; align-items: center; gap: 27px; font-size: 16px; font-weight: 600; }
.month button { width: 20px; height: 20px; }
.month svg { width: 16px; height: 16px; }
.columns { display: grid; grid-template-columns: 3fr 1fr; gap: 14px; }
.weekdays, .days { display: grid; grid-template-columns: repeat(7, 1fr); gap: 3px; }
.weekdays { margin-bottom: 6px; text-align: center; font-weight: 600; line-height: 34px; color: #000; }
.weekdays div { background: #fff; border-radius: 3px; }
.weekdays .weekend { background: #0fc0e8; color: #fff; }
.days { min-height: 498px; grid-template-rows: repeat(6, 1fr); }
.days div { display: flex; justify-content: center; padding-top: 4px; border: 1px solid #43464d; border-radius: 4px; font-size: 11px; }
.days span { width: 20px; height: 20px; border-radius: 50%; text-align: center; }
.days .today { border-color: #fff; outline: 1px solid #fff; }
.today span { background: #0fc0e8; }
.overview { border: 1px solid #4a4d55; border-radius: 7px; padding: 15px 13px; }
.overview h2 { display: flex; align-items: center; gap: 8px; color: #1cb2d8; font-size: 14px; font-weight: 600; white-space: nowrap; }
.overview svg { width: 18px; height: 20px; }
.overview p { margin-top: 14px; font-size: 11px; color: #858b97; }

.scrollbar { flex: none; width: 13px; display: flex; flex-direction: column; align-items: center; padding: 4px 0; background: #fcfcfc; border-left: 1px solid #d0d0d2; fill: #8b8b8b; }
.scrollbar svg { width: 8px; height: 7px; }
.track { flex: 1; width: 7px; padding: 4px 0; }
.thumb { height: 82%; border-radius: 4px; background: #8b8b8b; }
```
